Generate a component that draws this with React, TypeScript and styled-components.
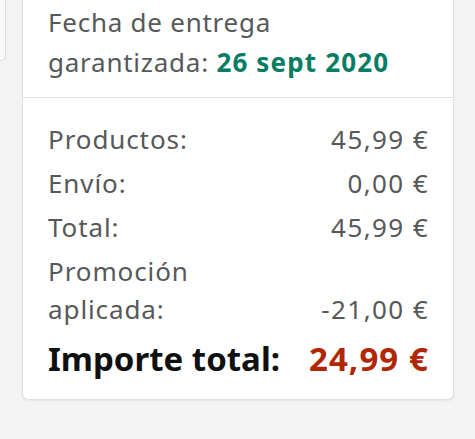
import styled, { createGlobalStyle } from "styled-components";

const GlobalStyle = createGlobalStyle`
  html, body {
    margin: 0;
    padding: 0;
    background: #f3f3f3;
  }
  body {
    font-family: "Noto Sans", "Open Sans", sans-serif;
  }
`;

const rows = [
  { label: "Productos:", value: "45,99 €" },
  { label: "Envío:", value: "0,00 €" },
  { label: "Total:", value: "45,99 €" },
  { label: "Promoción aplicada:", value: "-21,00 €" },
];

const App = () => {
  return (
    <>
      <GlobalStyle />
      <Page>
        <Peek />
        <Card>
          <Delivery>
            <DeliveryText>
              Fecha de entrega garantizada: <DeliveryDate>26 sept 2020</DeliveryDate>
            </DeliveryText>
          </Delivery>
          <Summary>
            {rows.map((row) => (
              <Row key={row.label}>
                <Label>{row.label}</Label>
                <Value>{row.value}</Value>
              </Row>
            ))}
            <Row $total>
              <TotalLabel>Importe total:</TotalLabel>
              <TotalValue>24,99 €</TotalValue>
            </Row>
          </Summary>
        </Card>
      </Page>
    </>
  );
};

export default App;

const Page = styled.div`
  display: flex;
  align-items: flex-start;
  gap: 16px;
  width: 475px;
  height: 439px;
  overflow: hidden;
`;

const Peek = styled.div`
  flex: 0 0 5px;
  height: 60px;
  background: #f9f9f9;
  border-right: 1px solid #dcdcdc;
  border-bottom: 1px solid #dcdcdc;
  border-bottom-right-radius: 5px;
`;

const Card = styled.div`
  flex: 0 0 432px;
  box-sizing: border-box;
  background: #fff;
  border: 1px solid #e0e0e0;
  border-top: none;
  border-radius: 0 0 6px 6px;
  box-shadow: 0 1px 2px rgba(0, 0, 0, 0.06);
`;

const Delivery = styled.div`
  padding: 2px 25px 15px 25px;
  border-bottom: 1px solid #e3e3e3;
`;

const DeliveryText = styled.div`
  max-width: 380px;
  font-size: 26px;
  line-height: 40px;
  color: #565959;
  letter-spacing: 0.75px;
`;

const DeliveryDate = styled.span`
  font-weight: 700;
  color: #067d62;
  letter-spacing: 1.15px;
`;

const Summary = styled.div`
  display: flex;
  flex-direction: column;
  gap: 6px;
  padding: 22px 25px 18px 25px;
`;

const Row = styled.div<{ $total?: boolean }>`
  display: flex;
  justify-content: space-between;
  align-items: flex-end;
  margin-top: ${(p) => (p.$total ? "3px" : "0")};
`;

const Label = styled.span`
  max-width: 240px;
  font-size: 26px;
  line-height: 38px;
  color: #565959;
  letter-spacing: 0.9px;
`;

const Value = styled.span`
  font-size: 26px;
  line-height: 38px;
  color: #565959;
  letter-spacing: 1.4px;
  margin-right: -1px;
`;

const TotalLabel = styled.span`
  font-size: 33px;
  line-height: 44px;
  font-weight: 700;
  color: #0f1111;
  white-space: nowrap;
`;

const TotalValue = styled.span`
  font-size: 33px;
  line-height: 44px;
  font-weight: 700;
  color: #b12704;
  white-space: nowrap;
  letter-spacing: 1.1px;
  margin-right: -1px;
`;
